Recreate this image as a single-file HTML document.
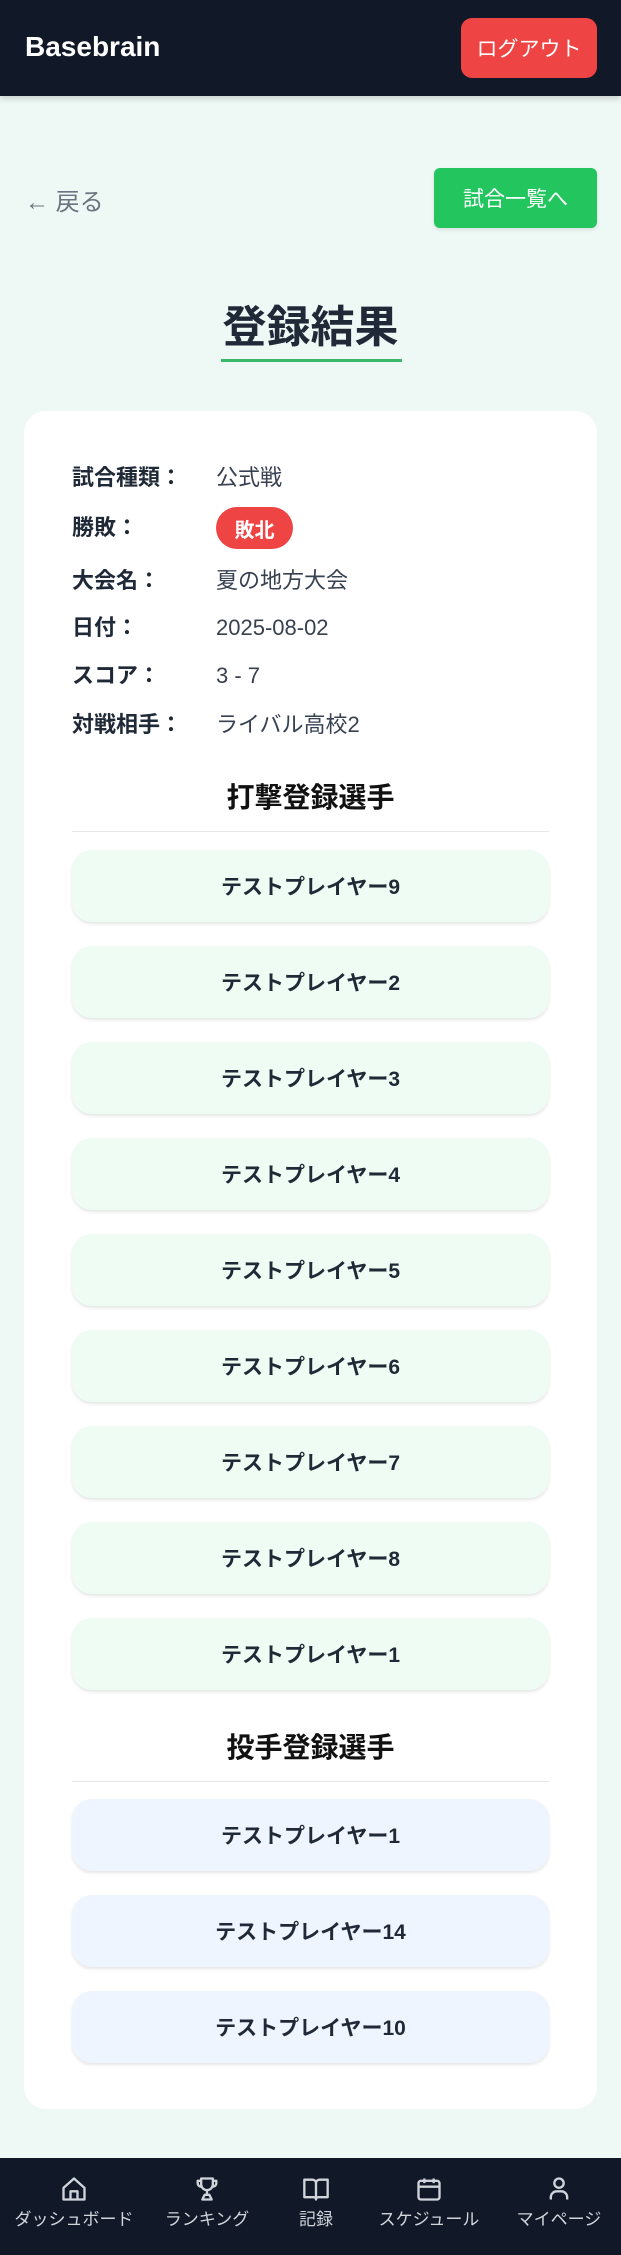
<!DOCTYPE html>
<html><head><meta charset="utf-8"><style>
*{margin:0;padding:0;box-sizing:border-box}
body{width:621px;height:2255px;background:#eef8f5;font-family:"Liberation Sans","Noto Sans CJK JP",sans-serif;position:relative;overflow:hidden;color:#1f2937}
.a{position:absolute}
.hdr{left:0;top:0;width:621px;height:96px;background:#111827;box-shadow:0 3px 6px rgba(0,0,0,.15)}
.logo{left:25px;top:31px;color:#fff;font-size:28px;font-weight:bold}
.btn{display:flex;align-items:center;justify-content:center;color:#fff;font-size:21px}
.card{left:24px;top:411px;width:573px;height:1698px;background:#fff;border-radius:22px}
.lbl{left:72px;font-size:22px;font-weight:bold;color:#1f2937;line-height:30px}
.val{left:216px;font-size:22px;color:#374151;line-height:30px}
.h{left:72px;width:477px;text-align:center;font-size:28px;font-weight:bold;color:#111;line-height:36px}
.div{left:72px;width:477px;height:1px;background:#e5e7eb}
.pb{left:72px;width:477px;height:72px;border-radius:20px;background:#effcf3;box-shadow:0 2px 3px rgba(0,0,0,.1);display:flex;align-items:center;justify-content:center;font-size:21px;font-weight:bold;color:#1f2937}
.pp{background:#eff5fe}
.nav{left:0;top:2158px;width:621px;height:97px;background:#111827}
.ni{position:absolute;top:2175px;width:140px;margin-left:-70px;text-align:center;color:#d1d5db;font-size:17px}
.ni svg{display:block;margin:0 auto 2px}
</style></head><body>
<div class="a hdr"></div>
<div class="a logo">Basebrain</div>
<div class="a btn" style="left:461px;top:18px;width:136px;height:60px;background:#ef4444;border-radius:11px">ログアウト</div>
<div class="a" style="left:25px;top:182px;font-size:24px;color:#6b7280">← 戻る</div>
<div class="a btn" style="left:434px;top:168px;width:163px;height:60px;background:#22c55e;border-radius:6px;box-shadow:0 2px 4px rgba(0,0,0,.1)">試合一覧へ</div>
<div class="a" style="left:0;top:302px;width:621px;text-align:center;font-size:44px;font-weight:bold;color:#1f2937;line-height:52px">登録結果</div>
<div class="a" style="left:221px;top:359px;width:181px;height:3px;background:#3cb86a"></div>
<div class="a card"></div>
<div class="a lbl" style="top:463px">試合種類：</div><div class="a val" style="top:463px">公式戦</div>
<div class="a lbl" style="top:513px">勝敗：</div>
<div class="a btn" style="left:216px;top:507px;width:77px;height:42px;background:#ef4444;border-radius:21px;font-weight:bold;font-size:20px">敗北</div>
<div class="a lbl" style="top:566px">大会名：</div><div class="a val" style="top:566px">夏の地方大会</div>
<div class="a lbl" style="top:613px">日付：</div><div class="a val" style="top:613px">2025-08-02</div>
<div class="a lbl" style="top:661px">スコア：</div><div class="a val" style="top:661px">3 - 7</div>
<div class="a lbl" style="top:710px">対戦相手：</div><div class="a val" style="top:710px">ライバル高校2</div>
<div class="a h" style="top:780px">打撃登録選手</div>
<div class="a div" style="top:831px"></div>
<div class="a pb" style="top:850px">テストプレイヤー9</div>
<div class="a pb" style="top:946px">テストプレイヤー2</div>
<div class="a pb" style="top:1042px">テストプレイヤー3</div>
<div class="a pb" style="top:1138px">テストプレイヤー4</div>
<div class="a pb" style="top:1234px">テストプレイヤー5</div>
<div class="a pb" style="top:1330px">テストプレイヤー6</div>
<div class="a pb" style="top:1426px">テストプレイヤー7</div>
<div class="a pb" style="top:1522px">テストプレイヤー8</div>
<div class="a pb" style="top:1618px">テストプレイヤー1</div>
<div class="a h" style="top:1730px">投手登録選手</div>
<div class="a div" style="top:1781px"></div>
<div class="a pb pp" style="top:1799px">テストプレイヤー1</div>
<div class="a pb pp" style="top:1895px">テストプレイヤー14</div>
<div class="a pb pp" style="top:1991px">テストプレイヤー10</div>
<div class="a nav"></div>
<div class="ni" style="left:74px"><svg width="28" height="28" viewBox="0 0 24 24" fill="none" stroke="#d1d5db" stroke-width="2" stroke-linejoin="round"><path d="M3 11l9-8 9 8v10H3z"/><path d="M9 21v-7h6v7"/></svg>ダッシュボード</div>
<div class="ni" style="left:207px"><svg width="28" height="28" viewBox="0 0 24 24" fill="none" stroke="#d1d5db" stroke-width="2" stroke-linejoin="round"><path d="M7 3h10v5a5 5 0 0 1-10 0z"/><path d="M7 5H4v2a3 3 0 0 0 3 3M17 5h3v2a3 3 0 0 1-3 3M12 13v4M8 21h8l-2-4h-4z"/></svg>ランキング</div>
<div class="ni" style="left:316px"><svg width="28" height="28" viewBox="0 0 24 24" fill="none" stroke="#d1d5db" stroke-width="2" stroke-linejoin="round"><path d="M2 4h7a3 3 0 0 1 3 3v14a2 2 0 0 0-2-2H2zM22 4h-7a3 3 0 0 0-3 3v14a2 2 0 0 1 2-2h8z"/></svg>記録</div>
<div class="ni" style="left:429px"><svg width="28" height="28" viewBox="0 0 24 24" fill="none" stroke="#d1d5db" stroke-width="2" stroke-linejoin="round"><rect x="3" y="5" width="18" height="16" rx="2"/><path d="M3 10h18M8 3v4M16 3v4"/></svg>スケジュール</div>
<div class="ni" style="left:559px"><svg width="28" height="28" viewBox="0 0 24 24" fill="none" stroke="#d1d5db" stroke-width="2"><circle cx="12" cy="7" r="4"/><path d="M5 21v-2a5 5 0 0 1 5-5h4a5 5 0 0 1 5 5v2"/></svg>マイページ</div>
</body></html>
